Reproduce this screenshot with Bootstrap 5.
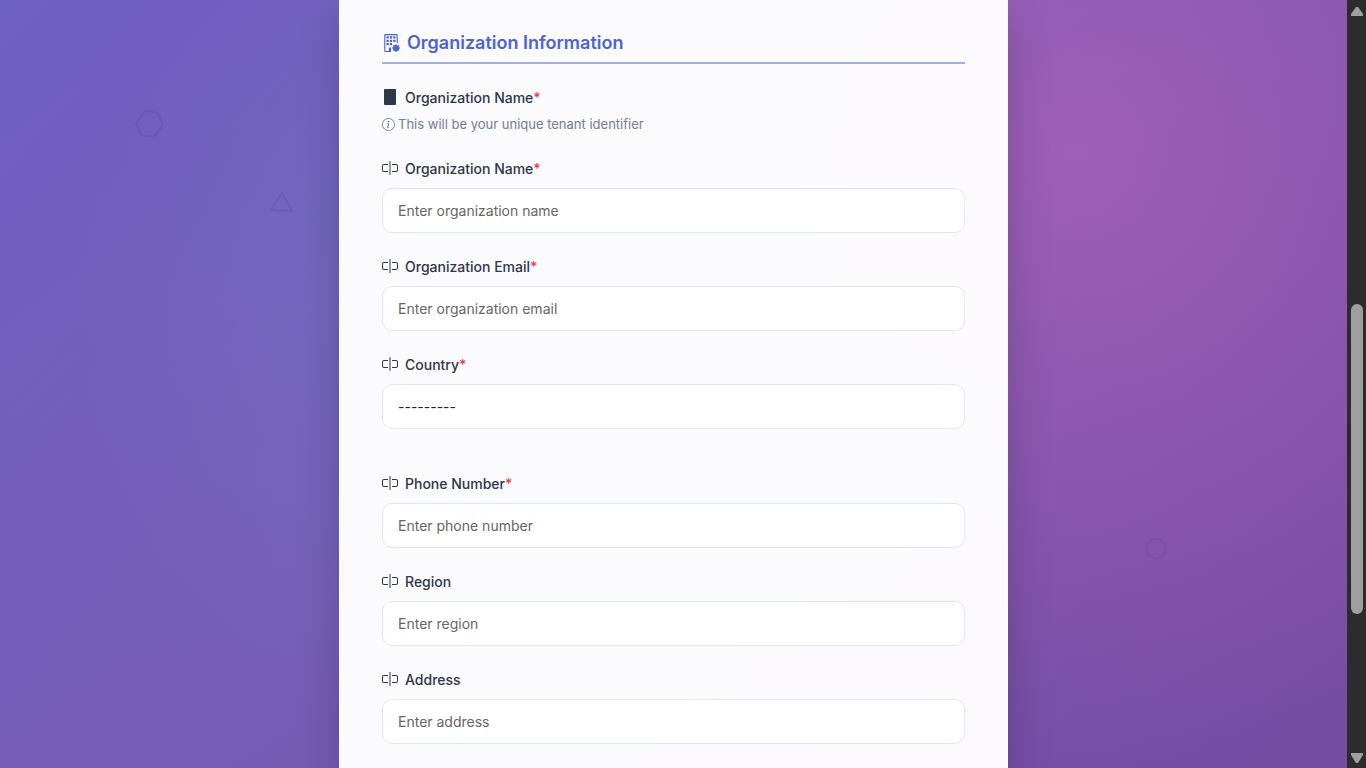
<!DOCTYPE html>
<html lang="en">
<head>
<meta charset="utf-8">
<meta name="viewport" content="width=device-width, initial-scale=1">
<title>Organization Information</title>
<link href="https://cdn.jsdelivr.net/npm/bootstrap@5.3.0/dist/css/bootstrap.min.css" rel="stylesheet">
<style>
body{font-family:Inter,"Liberation Sans",sans-serif;color:#2d3748}
.stage{
  background:
    radial-gradient(circle at 20% 80%,rgba(120,119,198,.2) 0%,transparent 50%),
    radial-gradient(circle at 80% 20%,rgba(255,119,198,.3) 0%,transparent 50%),
    radial-gradient(circle at 40% 40%,rgba(120,219,255,.15) 0%,transparent 50%),
    linear-gradient(135deg,#6f60c4 0%,#7656b2 50%,#764ba2 100%);
}
.panel{width:100%;max-width:669px;padding:31px 42px 60px;background:rgba(255,255,255,.97);border:solid rgba(255,255,255,.3);border-width:0 1px;box-shadow:0 20px 40px rgba(0,0,0,.2)}
.section-title{font-size:18px;line-height:24px;font-weight:600;color:#4c63d2;padding-bottom:7px;border-bottom:2px solid #a2aee8;gap:7px;margin-bottom:23px}
.field{margin-bottom:24px}
.field-label{display:flex;align-items:center;gap:7px;font-size:14px;line-height:22px;font-weight:500;margin-bottom:8px}
.field-label .ico{margin-bottom:2px}
.req{color:#e53e4f}
.hint{font-size:13px;line-height:20px;color:#718096;gap:3px;margin-top:-3px}
.field-empty{height:21px}
.field .form-control,.field .form-select{height:45px;margin-bottom:-1px;padding:0 15px;font-size:14px;border:1px solid #e2e8f0;border-radius:10px;background:#fff;color:#212529;box-shadow:none}
.form-control::placeholder{color:#666;opacity:1}
.ico{fill:currentColor;flex:none;display:block}
.shape{position:absolute;fill:none;stroke:#4b3a90;stroke-opacity:.18;stroke-width:2}
.scroller{width:19px;background:#2c2c2c;color:#9f9f9f;padding:7px 0 5px}
.thumb-track{display:grid;grid-template-rows:288fr 310fr 139fr;justify-items:center;width:100%}
.thumb{grid-row:2;width:12px;border-radius:6px;background:#9f9f9f}
</style>
</head>
<body>
<svg class="d-none" aria-hidden="true">
  <symbol id="i-input" viewBox="0 0 16 16"><path d="M10 5h4a1 1 0 0 1 1 1v4a1 1 0 0 1-1 1h-4v1h4a2 2 0 0 0 2-2V6a2 2 0 0 0-2-2h-4zM6 5V4H2a2 2 0 0 0-2 2v4a2 2 0 0 0 2 2h4v-1H2a1 1 0 0 1-1-1V6a1 1 0 0 1 1-1z"/><path d="M8 1a.5.5 0 0 1 .5.5v13a.5.5 0 0 1-1 0v-13A.5.5 0 0 1 8 1"/></symbol>
</svg>
<div class="d-flex vh-100 overflow-hidden">
  <main class="stage position-relative flex-grow-1 d-flex justify-content-center overflow-hidden">
    <svg class="shape" style="left:10%;top:14%" width="30" height="30" viewBox="0 0 30 30"><path d="M10 3 23 5 28 17 19 29 6 27 1 15Z"/></svg>
    <svg class="shape" style="left:20%;top:25%" width="24" height="22" viewBox="0 0 24 22"><path d="M13 1 23 19 2 18Z"/></svg>
    <svg class="shape" style="left:85%;top:70%;stroke-opacity:.12" width="22" height="22" viewBox="0 0 22 22"><path d="M8 1h7l5 5 1 7-4 6-6 2-6-2-4-6 1-7Z"/></svg>
    <form class="panel position-relative">
      <h2 class="section-title d-flex align-items-center">
        <svg class="ico" width="18" height="18" viewBox="0 0 16 16"><path d="M2 1a1 1 0 0 1 1-1h10a1 1 0 0 1 1 1v6.500a.5.5 0 0 1-1 0V1H3v14h3v-2.500a.5.5 0 0 1 .5-.5H8v4H3a1 1 0 0 1-1-1z"/><path d="M4 2h2v2H4zM7 2h2v2H7zM10 2h2v2h-2zM4 5h2v2H4zM7 5h2v2H7zM10 5h2v2h-2zM4 8h2v2H4zM7 8h2v2H7z"/><path d="M11.886 9.460c.18-.613 1.048-.613 1.229 0l.043.148a.64.64 0 0 0 .921.382l.136-.074c.561-.306 1.175.308.87.869l-.075.136a.64.64 0 0 0 .382.92l.149.045c.612.18.612 1.048 0 1.229l-.15.043a.64.64 0 0 0-.38.921l.074.136c.305.561-.309 1.175-.87.87l-.136-.075a.64.64 0 0 0-.92.382l-.045.149c-.18.612-1.048.612-1.229 0l-.043-.15a.64.64 0 0 0-.921-.38l-.136.074c-.561.305-1.175-.309-.87-.87l.075-.136a.64.64 0 0 0-.382-.92l-.148-.045c-.613-.18-.613-1.048 0-1.229l.148-.043a.64.64 0 0 0 .382-.921l-.074-.136c-.306-.561.308-1.175.869-.87l.136.075a.64.64 0 0 0 .92-.382z"/></svg>
        Organization Information
      </h2>
      <div class="field">
        <label class="field-label" for="org"><svg class="ico" width="16" height="16" viewBox="0 0 16 16"><rect x="2" width="12" height="16" rx="1"/></svg><span>Organization Name<span class="req">*</span></span></label>
        <div class="hint d-flex align-items-center"><svg class="ico" width="13" height="13" viewBox="0 0 16 16"><path d="M8 15A7 7 0 1 1 8 1a7 7 0 0 1 0 14m0 1A8 8 0 1 0 8 0a8 8 0 0 0 0 16"/><path d="m8.930 6.588-2.290.287-.082.38.45.083c.294.07.352.176.288.469l-.738 3.468c-.194.897.105 1.319.808 1.319.545 0 1.178-.252 1.465-.598l.088-.416c-.2.176-.492.246-.686.246-.275 0-.375-.193-.304-.533zM9 4.500a1 1 0 1 1-2 0 1 1 0 0 1 2 0"/></svg>This will be your unique tenant identifier</div>
      </div>
      <div class="field">
        <label class="field-label" for="org"><svg class="ico" width="16" height="16"><use href="#i-input"/></svg><span>Organization Name<span class="req">*</span></span></label>
        <input class="form-control" id="org" type="text" placeholder="Enter organization name">
      </div>
      <div class="field">
        <label class="field-label" for="email"><svg class="ico" width="16" height="16"><use href="#i-input"/></svg><span>Organization Email<span class="req">*</span></span></label>
        <input class="form-control" id="email" type="email" placeholder="Enter organization email">
      </div>
      <div class="field">
        <label class="field-label" for="country"><svg class="ico" width="16" height="16"><use href="#i-input"/></svg><span>Country<span class="req">*</span></span></label>
        <select class="form-select" id="country"><option>---------</option></select>
        <div class="field-empty"></div>
      </div>
      <div class="field">
        <label class="field-label" for="phone"><svg class="ico" width="16" height="16"><use href="#i-input"/></svg><span>Phone Number<span class="req">*</span></span></label>
        <input class="form-control" id="phone" type="tel" placeholder="Enter phone number">
      </div>
      <div class="field">
        <label class="field-label" for="region"><svg class="ico" width="16" height="16"><use href="#i-input"/></svg>Region</label>
        <input class="form-control" id="region" type="text" placeholder="Enter region">
      </div>
      <div class="field">
        <label class="field-label" for="address"><svg class="ico" width="16" height="16"><use href="#i-input"/></svg>Address</label>
        <input class="form-control" id="address" type="text" placeholder="Enter address">
      </div>
    </form>
  </main>
  <div class="scroller d-flex flex-column align-items-center flex-shrink-0" aria-hidden="true">
    <svg class="ico" width="12" height="9" viewBox="0 0 12 9"><path d="M5 0h2l5 7v2H0V7Z"/></svg>
    <div class="thumb-track flex-grow-1"><div class="thumb"></div></div>
    <svg class="ico" width="12" height="10" viewBox="0 0 12 10"><path d="M0 0h12v2L7 10H5L0 2Z"/></svg>
  </div>
</div>
<script src="https://cdn.jsdelivr.net/npm/bootstrap@5.3.0/dist/js/bootstrap.bundle.min.js"></script>
</body>
</html>
